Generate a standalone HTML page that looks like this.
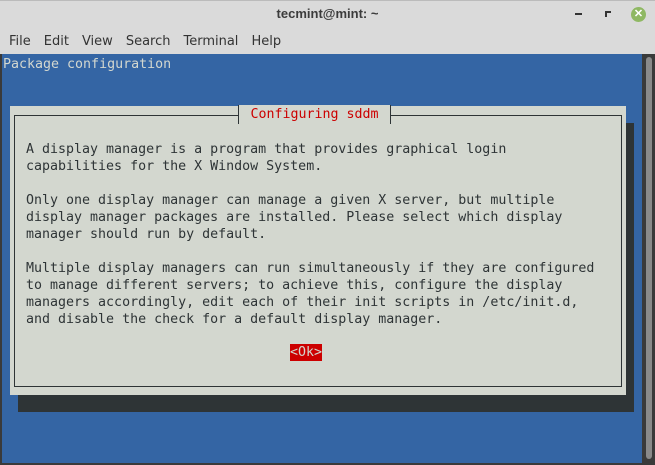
<!DOCTYPE html>
<html><head><style>
*{margin:0;padding:0;box-sizing:border-box}
body{width:655px;height:465px;overflow:hidden;background:#3a3a3a;position:relative;font-family:"DejaVu Sans Mono","Liberation Mono",monospace}
.tb{position:absolute;left:0;top:0;width:655px;height:54px;background:#dadada;border-top:1px solid #bbb}
.title{position:absolute;top:5px;left:0;width:655px;text-align:center;font:bold 13px "Liberation Sans","DejaVu Sans",sans-serif;color:#3c3c3c}
.menu{position:absolute;top:33px;left:9px;font:13px "DejaVu Sans","Liberation Sans",sans-serif;color:#333}
.menu span{margin-right:13px}
.term{position:absolute;left:2px;top:54px;width:640px;height:409px;background:#3465a4}
.sb{position:absolute;left:643px;top:54px;width:12px;height:411px;background:#3a3a3a}
.sb div{position:absolute;left:3px;top:3px;width:6px;height:402px;background:#8a8a8a;border-radius:3px}
pre{font-family:"DejaVu Sans Mono","Liberation Mono",monospace;font-size:13.3px;line-height:17px}
.shadow{position:absolute;left:18px;top:123px;width:616px;height:289px;background:#2e3436}
.dlg{position:absolute;left:10px;top:106px;width:616px;height:289px;background:#d3d7cf}
.inner{position:absolute;left:14px;top:115px;width:608px;height:272px;border:1px solid #2e3436}
.ttl{position:absolute;left:238px;top:105px;width:153px;height:19px;background:#d3d7cf;border-left:1px solid #2e3436;border-right:1px solid #2e3436;color:#cc0000;font-size:13.3px;text-align:center;line-height:19px}
.ok{position:absolute;left:290px;top:344px;width:32px;height:17px;background:#cc0000;color:#d3d7cf;font-size:13.3px;line-height:17px;text-align:center}
</style></head><body>
<div class="tb">
<div class="title">tecmint@mint: ~</div>
<div style="position:absolute;left:575px;top:12px;width:7px;height:2px;background:#333"></div>
<div style="position:absolute;left:605px;top:10px;width:6px;height:6px;border:2px solid #333;border-width:2px 0 0 2px"></div>
<div style="position:absolute;left:631px;top:6px;width:15px;height:15px;border-radius:50%;background:#8fb863;color:#fff;font:bold 11px sans-serif;text-align:center;line-height:15px">✕</div>
<div class="menu"><span>File</span><span>Edit</span><span>View</span><span>Search</span><span>Terminal</span><span>Help</span></div>
</div>
<div class="term"></div>
<pre style="position:absolute;left:3px;top:56px;color:#d3d7cf">Package configuration</pre>
<div class="sb"><div></div></div>
<div class="shadow"></div>
<div class="dlg"></div>
<div class="inner"></div>
<div class="ttl">Configuring sddm</div>
<pre style="position:absolute;left:26px;top:141px;color:#2e3436">A display manager is a program that provides graphical login
capabilities for the X Window System.

Only one display manager can manage a given X server, but multiple
display manager packages are installed. Please select which display
manager should run by default.

Multiple display managers can run simultaneously if they are configured
to manage different servers; to achieve this, configure the display
managers accordingly, edit each of their init scripts in /etc/init.d,
and disable the check for a default display manager.</pre>
<div class="ok">&lt;Ok&gt;</div>
</body></html>
